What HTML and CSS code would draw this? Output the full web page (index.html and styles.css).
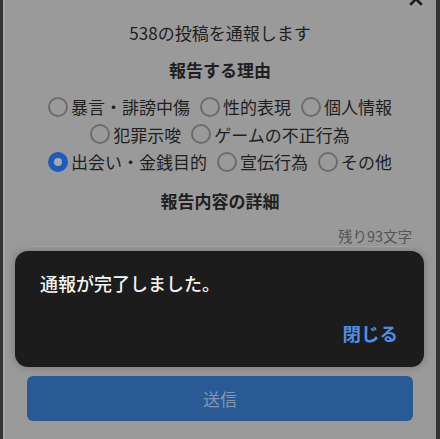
FILE: index.html
```html
<!DOCTYPE html>
<html lang="ja">
<head>
<meta charset="utf-8">
<link rel="stylesheet" href="styles.css">
</head>
<body>
<div class="modal">
  <svg class="close" width="14" height="14" viewBox="0 0 14 14"><path d="M2 2 L12 12 M12 2 L2 12" stroke="#1c1c1c" stroke-width="2.6" stroke-linecap="round"/></svg>
  <h1 class="title">538の投稿を通報します</h1>
  <h2 class="heading">報告する理由</h2>
  <div class="reasons">
    <label class="reason"><span class="radio"></span>暴言・誹謗中傷</label>
    <label class="reason"><span class="radio"></span>性的表現</label>
    <label class="reason"><span class="radio"></span>個人情報</label>
    <label class="reason"><span class="radio"></span>犯罪示唆</label>
    <label class="reason"><span class="radio"></span>ゲームの不正行為</label>
    <label class="reason"><span class="radio checked"></span>出会い・金銭目的</label>
    <label class="reason"><span class="radio"></span>宣伝行為</label>
    <label class="reason"><span class="radio"></span>その他</label>
  </div>
  <h2 class="heading heading-detail">報告内容の詳細</h2>
  <div class="counter">残り93文字</div>
  <div class="textarea"></div>
  <div class="submit">送信</div>

  <div class="toast">
    <div class="toast-msg">通報が完了しました。</div>
    <div class="toast-action">閉じる</div>
  </div>
</div>
</body>
</html>
```
FILE: styles.css
```css
html, body {
  margin: 0;
  padding: 0;
  background: #333333;
}
body {
  width: 440px;
  height: 439px;
  overflow: hidden;
}
.modal {
  position: relative;
  box-sizing: border-box;
  height: 439px;
  margin: 0 4px 0 3px;
  padding: 21px 23px 0 24px;
  background: #9a9a9a;
  box-shadow: inset 2px 0 0 #a6a6a6;
  font-family: "Noto Sans CJK JP", "Noto Sans", sans-serif;
  color: #1f1f1f;
  overflow: hidden;
}
.close {
  position: absolute;
  top: -8px;
  right: 13px;
}
.title {
  margin: 0;
  font-size: 17px;
  font-weight: 400;
  line-height: 24px;
  text-align: center;
}
.heading {
  margin: 13px 0 0;
  font-size: 17px;
  font-weight: 700;
  line-height: 24px;
  text-align: center;
}
.reasons {
  margin-top: 11px;
  display: flex;
  flex-wrap: wrap;
  justify-content: center;
  column-gap: 10px;
}
.reason {
  display: flex;
  align-items: center;
  gap: 3px;
  font-size: 17px;
  line-height: 27.5px;
  white-space: nowrap;
}
.radio {
  box-sizing: border-box;
  width: 20px;
  height: 20px;
  border-radius: 50%;
  border: 2px solid #6c6c6c;
}
.radio.checked {
  border: 6px solid #1d5bbd;
  background: #a9a9a9;
}
.heading-detail {
  margin-top: 13px;
}
.counter {
  margin-top: 13px;
  font-size: 14.5px;
  line-height: 20px;
  text-align: right;
  padding-right: 1px;
  color: #555555;
}
.textarea {
  box-sizing: border-box;
  height: 118px;
  border: 1px solid #a8a8a8;
  border-radius: 6px;
}
.submit {
  margin-top: 12px;
  height: 45px;
  border-radius: 6px;
  background: #295a93;
  color: #8197b3;
  font-size: 17px;
  line-height: 45px;
  text-align: center;
}
.toast {
  position: absolute;
  left: 12px;
  right: 12px;
  top: 251px;
  height: 116px;
  box-sizing: border-box;
  padding: 19px 26px 0 25px;
  background: #1c1c1c;
  border-radius: 13px;
  box-shadow: 0 0 8px rgba(0, 0, 0, 0.25);
  display: flex;
  flex-direction: column;
}
.toast-msg {
  color: #f4f4f4;
  font-size: 18px;
  font-weight: 500;
  line-height: 26px;
}
.toast-action {
  margin-top: 24px;
  align-self: flex-end;
  color: #4d8fe6;
  font-size: 18.5px;
  font-weight: 700;
  line-height: 26px;
}
```
